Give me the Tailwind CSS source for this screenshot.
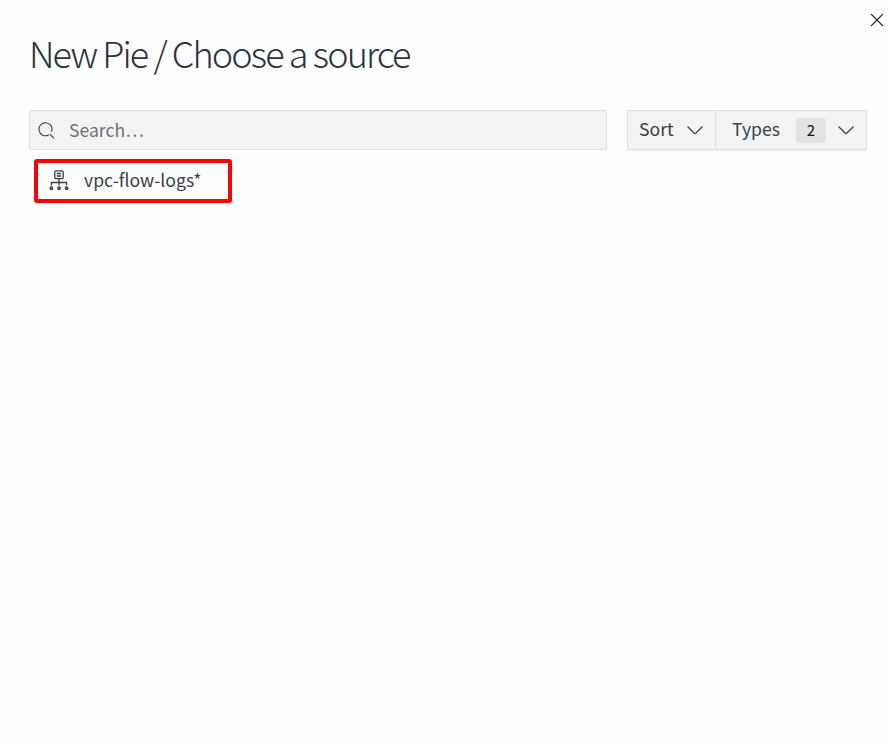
<!DOCTYPE html>
<html lang="en">
<head>
<meta charset="utf-8">
<title>New Pie / Choose a source</title>
<script src="https://cdn.jsdelivr.net/npm/@tailwindcss/browser@4"></script>
</head>
<body class="h-[744px] w-[892px] overflow-hidden bg-[#fdfeff] font-['Noto_Sans_CJK_SC','Noto_Sans_CJK_JP',sans-serif] text-[#343f4c]">
<main class="relative flex h-full flex-col pl-[29px] pr-[25px] pt-[28px]">
  <button aria-label="Close" class="absolute left-[870px] top-[13px] size-[14px]">
    <svg viewBox="0 0 14 14" class="size-[14px]" fill="none" stroke="#1a2430" stroke-width="1.3" stroke-linecap="round"><path d="M1.4 1.4l11.2 11.2M12.6 1.4L1.4 12.6"/></svg>
  </button>
  <h1 class="h-[48px] whitespace-nowrap text-[36px] font-light leading-[48px] tracking-[-1.87px] text-[#2a343f]">New Pie / Choose a source</h1>
  <div class="mt-[34px] flex h-[40px] gap-[20px] text-[17.6px] leading-[38px]">
    <label class="flex w-[578px] items-center rounded-[2px] border border-[#dddfe2] bg-[#f2f3f5] pl-[8px] text-[#6a717b]">
      <svg viewBox="0 0 17 17" class="mr-[14px] size-[17px] shrink-0" fill="none" stroke="#343f4c" stroke-width="1.1" stroke-linecap="round"><path d="M10.5 13A6.5 6.5 0 1 1 13.6 9.4M12.1 12.3l3.5 3.6"/></svg>
      <span class="h-[38px]">Search…</span>
    </label>
    <div class="flex w-[240px] border border-[#dddfe2] bg-[#f2f3f5] shadow-[0_2px_2px_-1px_rgba(0,0,0,0.08)]">
      <button class="flex w-[88px] items-center border-r border-[#dddfe2] pl-[11px]">
        <span class="mt-[-2px] w-[48px] text-left">Sort</span>
        <svg viewBox="0 0 16 9" class="h-[9px] w-[16px]" fill="none" stroke="#343f4c" stroke-width="1.3" stroke-linecap="round" stroke-linejoin="round"><path d="M1 1l6.3 6.3q.7.6 1.4 0L15 1"/></svg>
      </button>
      <button class="flex flex-1 items-center pl-[16px]">
        <span class="mt-[-2px] w-[64px] text-left">Types</span>
        <span class="h-[25px] w-[30px] rounded-[4px] bg-[#e1e3e6] text-center text-[15px] leading-[24px] text-[#101317]">2</span>
        <svg viewBox="0 0 16 9" class="ml-[12px] h-[9px] w-[16px]" fill="none" stroke="#343f4c" stroke-width="1.3" stroke-linecap="round" stroke-linejoin="round"><path d="M1 1l6.3 6.3q.7.6 1.4 0L15 1"/></svg>
      </button>
    </div>
  </div>
  <ul class="ml-[5px] mt-[9px]">
    <li class="flex h-[44px] w-[198px] items-center rounded-[3px] border-4 border-[#fe0000] pl-[11px] text-[17.6px] leading-[36px]">
      <svg viewBox="0 0 20 21" class="mr-[15px] mt-[-2px] h-[21px] w-[20px]" fill="none" stroke="#343f4c" stroke-width="1.3"><rect x="5.8" y=".9" width="8.4" height="7.8" rx="1.3"/><path d="M7.9 3.5h4.2M7.9 6h4.2M10 8.7v6.8M2.4 15.5v-3h15.2v3"/><g stroke-width="1.5"><circle cx="2.4" cy="18.3" r="1.2"/><circle cx="10" cy="18.3" r="1.2"/><circle cx="17.6" cy="18.3" r="1.2"/></g></svg>
      <span class="mt-[-2px]">vpc-flow-logs*</span>
    </li>
  </ul>
</main>
</body>
</html>
